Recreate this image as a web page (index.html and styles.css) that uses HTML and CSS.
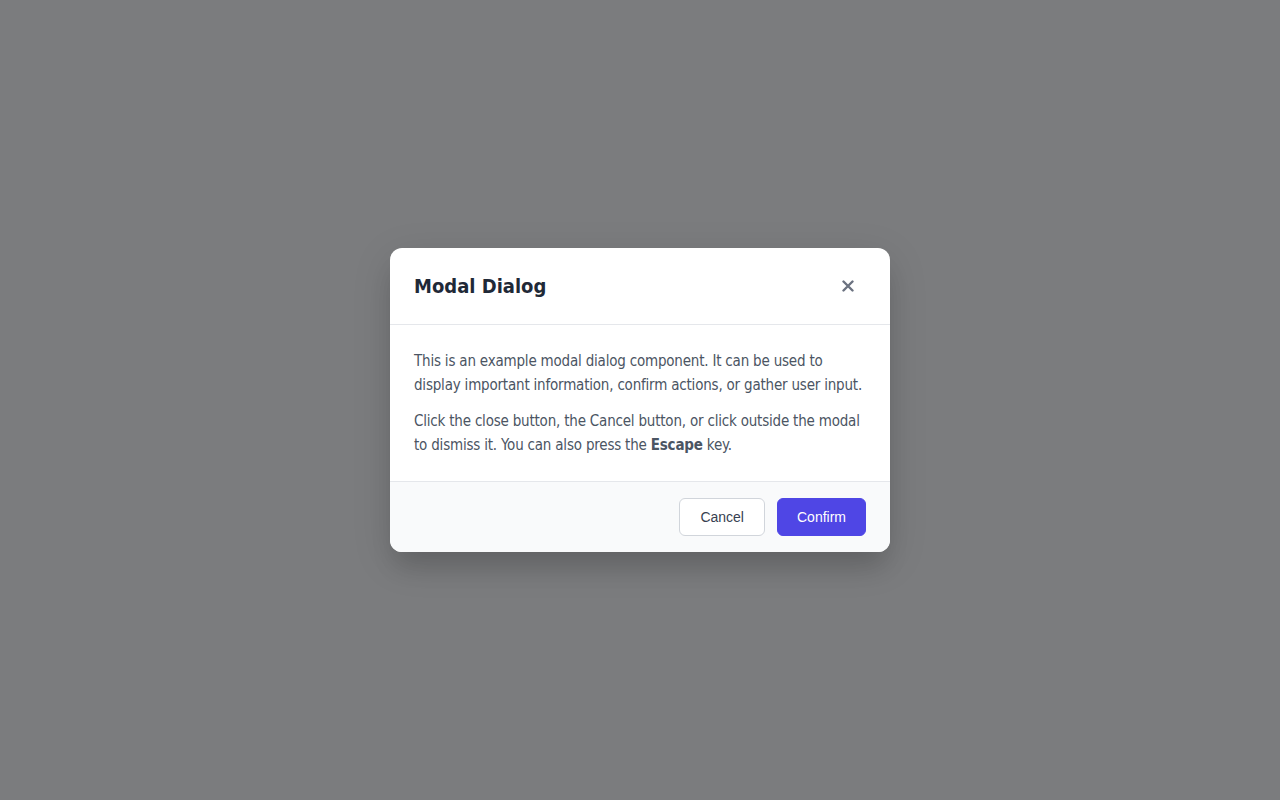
FILE: index.html
```html
<!DOCTYPE html>
<html lang="en">
<head>
<meta charset="utf-8">
<title>Modal Dialog</title>
<link rel="stylesheet" href="styles.css">
</head>
<body>
<div class="overlay">
  <div class="modal" role="dialog" aria-labelledby="modal-title">
    <div class="modal-header">
      <h2 id="modal-title" class="modal-title">Modal Dialog</h2>
      <button class="close-btn" aria-label="Close">
        <svg width="12" height="12" viewBox="0 0 12 12"><path d="M1.5 1.5 L10.5 10.5 M10.5 1.5 L1.5 10.5" stroke="#6b7280" stroke-width="2.4" stroke-linecap="round"/></svg>
      </button>
    </div>
    <div class="modal-body">
      <p>This is an example modal dialog component. It can be used to display important information, confirm actions, or gather user input.</p>
      <p>Click the close button, the Cancel button, or click outside the modal to dismiss it. You can also press the <strong>Escape</strong> key.</p>
    </div>
    <div class="modal-footer">
      <button class="btn btn-secondary">Cancel</button>
      <button class="btn btn-primary">Confirm</button>
    </div>
  </div>
</div>
</body>
</html>
```
FILE: styles.css
```css
html, body {
  margin: 0;
  padding: 0;
  height: 100%;
}
body {
  background: #7b7c7e;
  font-family: "DejaVu Sans Condensed", "DejaVu Sans", sans-serif;
}
.overlay {
  height: 100%;
  display: flex;
  align-items: center;
  justify-content: center;
}
.modal {
  width: 500px;
  background: #ffffff;
  border-radius: 12px;
  box-shadow: 0 20px 25px -5px rgba(0,0,0,0.12), 0 10px 40px rgba(0,0,0,0.12);
  overflow: hidden;
}
.modal-header {
  display: flex;
  align-items: center;
  justify-content: space-between;
  padding: 24px;
  border-bottom: 1px solid #e5e7eb;
}
.modal-title {
  margin: 0;
  font-size: 20px;
  line-height: 28px;
  font-weight: 700;
  color: #1f2937;
}
.close-btn {
  width: 28px;
  height: 28px;
  margin-right: 4px;
  border: none;
  background: transparent;
  padding: 0;
  display: flex;
  align-items: center;
  justify-content: center;
  cursor: pointer;
}
.modal-body {
  padding: 24px;
  color: #4b5563;
  font-size: 15px;
  line-height: 24px;
  letter-spacing: -0.2px;
}
.modal-body p {
  margin: 0 0 12px;
}
.modal-body p:last-child {
  margin-bottom: 0;
}
.modal-body strong {
  font-weight: 700;
  color: #4b5563;
}
.modal-footer {
  display: flex;
  justify-content: flex-end;
  gap: 12px;
  padding: 16px 24px;
  background: #f9fafb;
  border-top: 1px solid #e5e7eb;
}
.btn {
  height: 38px;
  padding: 0 20px;
  border-radius: 6px;
  font-family: "Liberation Sans", Arial, sans-serif;
  font-size: 14px;
  cursor: pointer;
}
.btn-secondary {
  background: #ffffff;
  border: 1px solid #d1d5db;
  color: #374151;
}
.btn-primary {
  padding: 0 19px;
  background: #4f46e5;
  border: 1px solid #4f46e5;
  color: #ffffff;
}
```
